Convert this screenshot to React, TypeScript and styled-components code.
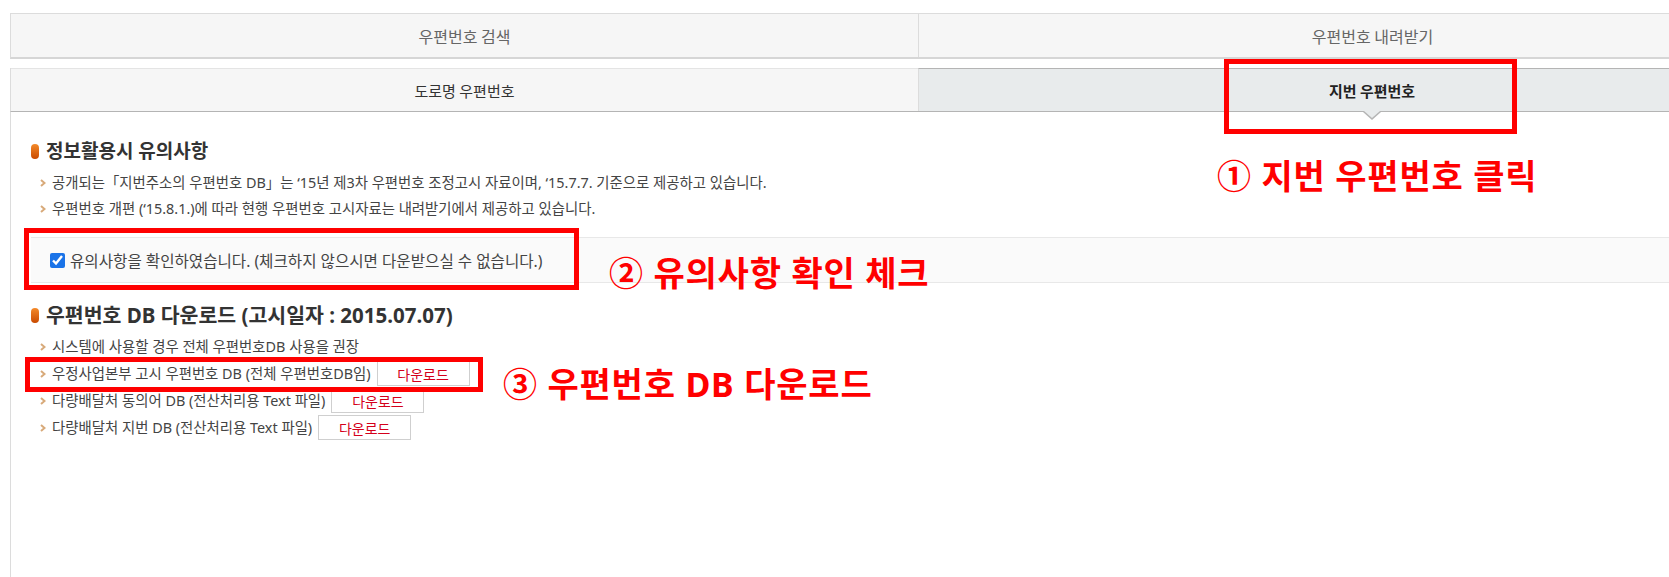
import React from 'react';
import styled, { createGlobalStyle } from 'styled-components';

const GlobalStyle = createGlobalStyle`
    html, body {
        margin: 0;
        padding: 0;
        background: #fff;
    }
    body {
        font-family: "Noto Sans", "Noto Sans CJK KR", sans-serif;
        color: #444;
    }
`;

const Page = styled.div`
    position: relative;
    width: 1669px;
    height: 577px;
    overflow: hidden;
    box-sizing: border-box;
    padding: 13px 0 0 10px;
    display: flex;
    flex-direction: column;
`;

const MainTabs = styled.div`
    display: flex;
    width: 1814px;
    height: 46px;
    box-sizing: border-box;
    border-top: 1px solid #dcdcdc;
    border-bottom: 2px solid #d6d6d6;
    border-left: 1px solid #dcdcdc;
`;

const MainTab = styled.div`
    flex: 0 0 907px;
    display: flex;
    align-items: center;
    justify-content: center;
    background: #f6f6f6;
    color: #666;
    font-family: "Noto Sans CJK KR", sans-serif;
    font-size: 16px;

    & + & {
        border-left: 1px solid #dcdcdc;
    }
`;

const SubTabs = styled.div`
    display: flex;
    width: 1814px;
    height: 44px;
    margin-top: 9px;
    box-sizing: border-box;
    border-bottom: 1px solid #b4b4b4;
    border-left: 1px solid #dcdcdc;
`;

const SubTab = styled.div<{ $active?: boolean }>`
    position: relative;
    flex: 0 0 907px;
    display: flex;
    align-items: center;
    justify-content: center;
    box-sizing: border-box;
    border-top: 1px solid ${(p) => (p.$active ? '#b4b4b4' : '#e4e4e4')};
    background: ${(p) => (p.$active ? '#e8ebec' : '#f6f6f6')};
    color: ${(p) => (p.$active ? '#222' : '#333')};
    font-family: "Noto Sans CJK KR", sans-serif;
    font-size: 15px;
    font-weight: ${(p) => (p.$active ? 700 : 400)};

    & + & {
        border-left: 1px solid #dcdcdc;
    }

    ${(p) =>
        p.$active &&
        `
        &::before, &::after {
            content: '';
            position: absolute;
            left: 50%;
            width: 0;
            height: 0;
            border-style: solid;
        }
        &::before {
            bottom: -9px;
            margin-left: -9px;
            border-width: 8px 9px 0 9px;
            border-color: #b4b4b4 transparent transparent transparent;
        }
        &::after {
            bottom: -7px;
            margin-left: -8px;
            border-width: 7px 8px 0 8px;
            border-color: #e8ebec transparent transparent transparent;
        }
    `}
`;

const Content = styled.div`
    flex: 1;
    border-left: 1px solid #dcdcdc;
    padding: 25px 0 0 20px;
`;

const SectionTitle = styled.h3<{ $top?: number; $size?: number }>`
    display: flex;
    align-items: center;
    gap: 7px;
    margin: ${(p) => p.$top ?? 0}px 0 0 0;
    font-size: ${(p) => p.$size ?? 20}px;
    line-height: 28px;
    font-weight: 700;
    color: #333;
`;

const TitleMark = styled.span`
    display: inline-block;
    width: 8px;
    height: 15px;
    border-radius: 4px;
    background: linear-gradient(#f48a2a, #c94a00);
`;

const List = styled.ul`
    list-style: none;
    margin: 5px 0 0 0;
    padding: 0 0 0 9px;
    font-size: 14.4px;
    color: #444;
`;

const Item = styled.li<{ $tall?: boolean }>`
    display: flex;
    align-items: center;
    gap: 6px;
    min-height: ${(p) => (p.$tall ? 27 : 26)}px;
    line-height: 26px;
    white-space: nowrap;
`;

const Chevron = () => (
    <svg width="6" height="8" viewBox="0 0 6 8">
        <polyline
            points="1,1 4.5,4 1,7"
            fill="none"
            stroke="#d8aa7a"
            strokeWidth="2"
        />
    </svg>
);

const NoticeBox = styled.div`
    display: flex;
    align-items: center;
    height: 46px;
    margin-top: 15px;
    box-sizing: border-box;
    padding-left: 19px;
    background: #fafafa;
    border-top: 1px solid #e8e8e8;
    border-bottom: 1px solid #e8e8e8;
`;

const Agree = styled.label`
    display: flex;
    align-items: center;
    gap: 5px;
    font-size: 15.6px;
    color: #444;

    input {
        width: 15px;
        height: 15px;
        margin: 0;
        accent-color: #1a73e8;
    }
`;

const DownloadButton = styled.button`
    width: 93px;
    height: 25px;
    padding: 0;
    border: 1px solid #cfcfcf;
    background: #fff;
    color: #d4001a;
    font-family: "Noto Sans CJK KR", sans-serif;
    font-size: 14px;
    cursor: pointer;
`;

// annotation overlays drawn over the captured page
const MarkBox = styled.div`
    position: absolute;
    box-sizing: border-box;
    border: 5px solid #ff0000;
    pointer-events: none;
`;

const MarkText = styled.div`
    position: absolute;
    color: #ff0000;
    font-size: 34px;
    font-weight: 700;
    line-height: 1;
    white-space: nowrap;
    letter-spacing: 0.8px;
`;

const downloads = [
    '우정사업본부 고시 우편번호 DB (전체 우편번호DB임)',
    '다량배달처 동의어 DB (전산처리용 Text 파일)',
    '다량배달처 지번 DB (전산처리용 Text 파일)',
];

const App = (): JSX.Element => (
    <Page>
        <GlobalStyle />
        <MainTabs>
            <MainTab>우편번호 검색</MainTab>
            <MainTab>우편번호 내려받기</MainTab>
        </MainTabs>
        <SubTabs>
            <SubTab>도로명 우편번호</SubTab>
            <SubTab $active>지번 우편번호</SubTab>
        </SubTabs>
        <Content>
            <SectionTitle $size={19}>
                <TitleMark />
                정보활용시 유의사항
            </SectionTitle>
            <List>
                <Item>
                    <Chevron />
                    공개되는「지번주소의 우편번호 DB」는 ‘15년 제3차 우편번호 조정고시 자료이며, ‘15.7.7. 기준으로 제공하고 있습니다.
                </Item>
                <Item>
                    <Chevron />
                    우편번호 개편 (‘15.8.1.)에 따라 현행 우편번호 고시자료는 내려받기에서 제공하고 있습니다.
                </Item>
            </List>
            <NoticeBox>
                <Agree>
                    <input type="checkbox" defaultChecked />
                    유의사항을 확인하였습니다. (체크하지 않으시면 다운받으실 수 없습니다.)
                </Agree>
            </NoticeBox>
            <SectionTitle $top={18} $size={20.5}>
                <TitleMark />
                우편번호 DB 다운로드 (고시일자 : 2015.07.07)
            </SectionTitle>
            <List>
                <Item>
                    <Chevron />
                    시스템에 사용할 경우 전체 우편번호DB 사용을 권장
                </Item>
                {downloads.map((label) => (
                    <Item key={label} $tall>
                        <Chevron />
                        {label}
                        <DownloadButton>다운로드</DownloadButton>
                    </Item>
                ))}
            </List>
        </Content>

        <MarkBox style={{ left: 1224, top: 59, width: 293, height: 75 }} />
        <MarkText style={{ left: 1217, top: 159 }}>① 지번 우편번호 클릭</MarkText>
        <MarkBox style={{ left: 24, top: 228, width: 555, height: 62 }} />
        <MarkText style={{ left: 609, top: 256 }}>② 유의사항 확인 체크</MarkText>
        <MarkBox style={{ left: 25, top: 357, width: 458, height: 35 }} />
        <MarkText style={{ left: 503, top: 367 }}>③ 우편번호 DB 다운로드</MarkText>
    </Page>
);

export default App;
